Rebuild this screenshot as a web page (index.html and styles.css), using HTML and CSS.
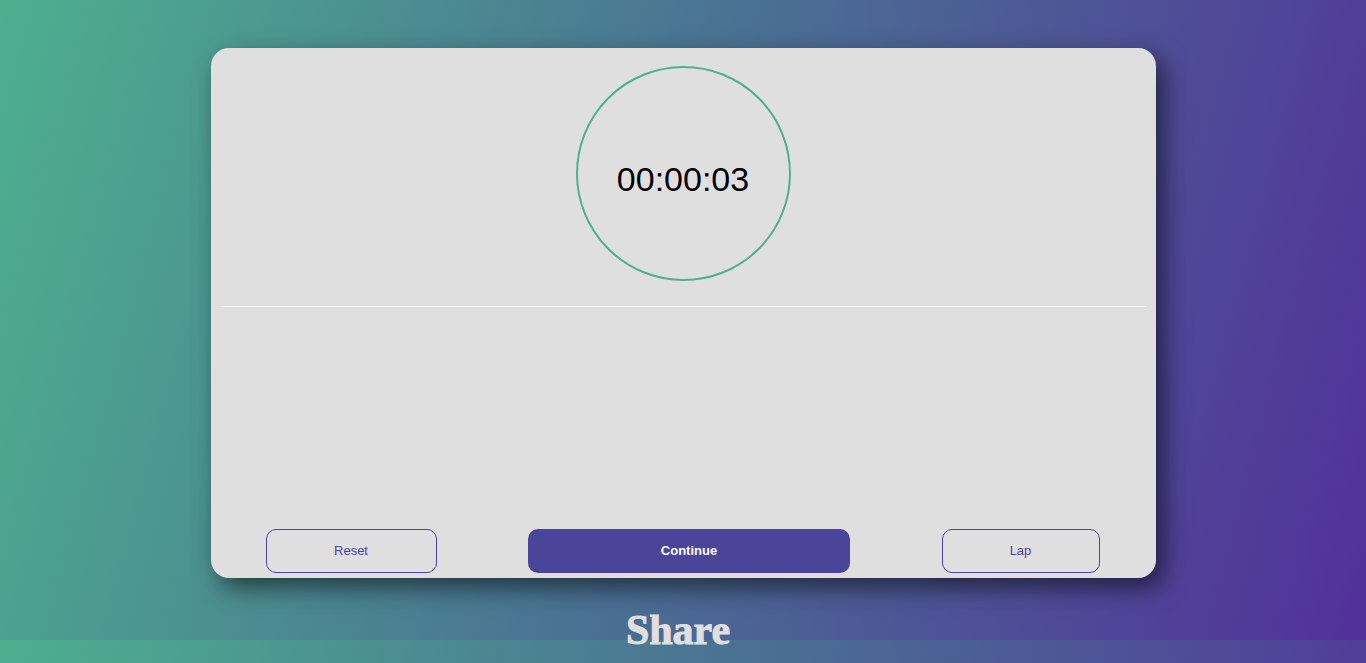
FILE: index.html
```html
<!DOCTYPE html>
<html lang="en">
<head>
<meta charset="utf-8">
<title>Stopwatch</title>
<link rel="stylesheet" href="styles.css">
</head>
<body>
<main class="page">
  <section class="card">
    <div class="dial">
      <span class="time">00:00:03</span>
    </div>
    <div class="divider"></div>
    <div class="laps"></div>
    <div class="controls">
      <button class="btn btn-outline btn-reset">Reset</button>
      <button class="btn btn-primary">Continue</button>
      <button class="btn btn-outline btn-lap">Lap</button>
    </div>
  </section>
  <h2 class="share">Share</h2>
</main>
</body>
</html>
```

FILE: styles.css
```css
html {
  min-height: 100%;
  background-color: #4a6f93;
  background-image:
    linear-gradient(105deg, #4daf8e 0%, #4a6f93 50%, #52309a 100%),
    linear-gradient(105deg, #4daf8e 0%, #4a6f93 50%, #52309a 100%);
  background-size: 100% 640px, 100% 640px;
  background-position: 0 0, 0 640px;
  background-repeat: no-repeat, no-repeat;
}

body {
  margin: 0;
  font-family: "Liberation Sans", Arial, sans-serif;
}

.page {
  padding-top: 48px;
  display: flex;
  flex-direction: column;
  align-items: center;
}

.card {
  width: 945px;
  height: 530px;
  box-sizing: border-box;
  padding: 18px 10px 5px;
  background: #e0dfe0;
  border-radius: 18px;
  box-shadow: 8px 10px 24px rgba(0, 0, 0, 0.55);
  display: flex;
  flex-direction: column;
}

.dial {
  width: 215px;
  height: 215px;
  box-sizing: border-box;
  margin: 0 auto;
  border: 2px solid #4eb08c;
  border-radius: 50%;
  display: flex;
  align-items: center;
  justify-content: center;
}

.time {
  font-size: 34px;
  color: #000;
  margin-top: 11px;
  line-height: 1;
}

.divider {
  height: 1px;
  background: #f5f5f5;
  margin-top: 25px;
}

.laps {
  flex: 1;
}

.controls {
  display: flex;
  justify-content: space-between;
  align-items: center;
  padding: 0 46px 0 45px;
}

.btn {
  height: 44px;
  box-sizing: border-box;
  border-radius: 10px;
  font-family: "Liberation Sans", Arial, sans-serif;
  font-size: 13px;
  padding: 0 0 2px;
  cursor: pointer;
}

.btn-outline {
  background: transparent;
  border: 1px solid #4a45a0;
  color: #4a45a0;
}

.btn-reset {
  width: 171px;
}

.btn-lap {
  width: 158px;
}

.btn-primary {
  width: 322px;
  background: #4a4599;
  border: none;
  color: #fff;
  font-weight: bold;
}

.share {
  margin: 28px 0 0;
  padding-right: 10px;
  font-family: "Liberation Serif", "Times New Roman", serif;
  font-weight: bold;
  font-size: 42px;
  line-height: 48px;
  color: #e0dfe0;
  -webkit-text-stroke: 1px #e0dfe0;
}
```
